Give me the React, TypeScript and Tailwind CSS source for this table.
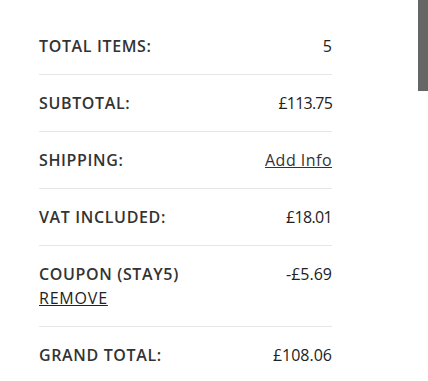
export default function App() {
  const rows = [
    { label: "TOTAL ITEMS:", value: "5", cls: "text-[#222]" },
    { label: "SUBTOTAL:", value: "£113.75", cls: "text-[#222] tracking-[-0.05em]" },
    { label: "SHIPPING:", value: "Add Info", cls: "underline text-[#333] tracking-[0.03em]" },
    { label: "VAT INCLUDED:", value: "£18.01", cls: "text-[#222] tracking-[-0.04em]" },
  ]

  return (
    <div className="relative min-h-[381px] bg-white font-['Open_Sans',sans-serif] text-[16px]">
      {/* scrollbar thumb */}
      <div className="fixed right-0 top-0 w-[10px] h-[91px] bg-[#666]"></div>

      <div className="pl-[39px] pt-[18px] w-[332px]">
        {rows.map((r) => (
          <div key={r.label} className="flex justify-between items-center py-4 border-b border-[#e6e6e6] leading-6">
            <span className="font-semibold tracking-[0.04em] text-[#333]">{r.label}</span>
            <span className={r.cls}>{r.value}</span>
          </div>
        ))}

        {/* coupon */}
        <div className="flex justify-between items-start py-4 border-b border-[#e6e6e6] leading-6">
          <div className="flex flex-col items-start">
            <span className="font-semibold tracking-[0.04em] text-[#333]">COUPON (STAY5)</span>
            <span className="underline text-[#222] tracking-[0.05em]">REMOVE</span>
          </div>
          <span className="text-[#222]">-£5.69</span>
        </div>

        <div className="flex justify-between items-center py-4 leading-6">
          <span className="font-semibold tracking-[0.04em] text-[#333]">GRAND TOTAL:</span>
          <span className="text-[#222]">£108.06</span>
        </div>
      </div>
    </div>
  )
}
